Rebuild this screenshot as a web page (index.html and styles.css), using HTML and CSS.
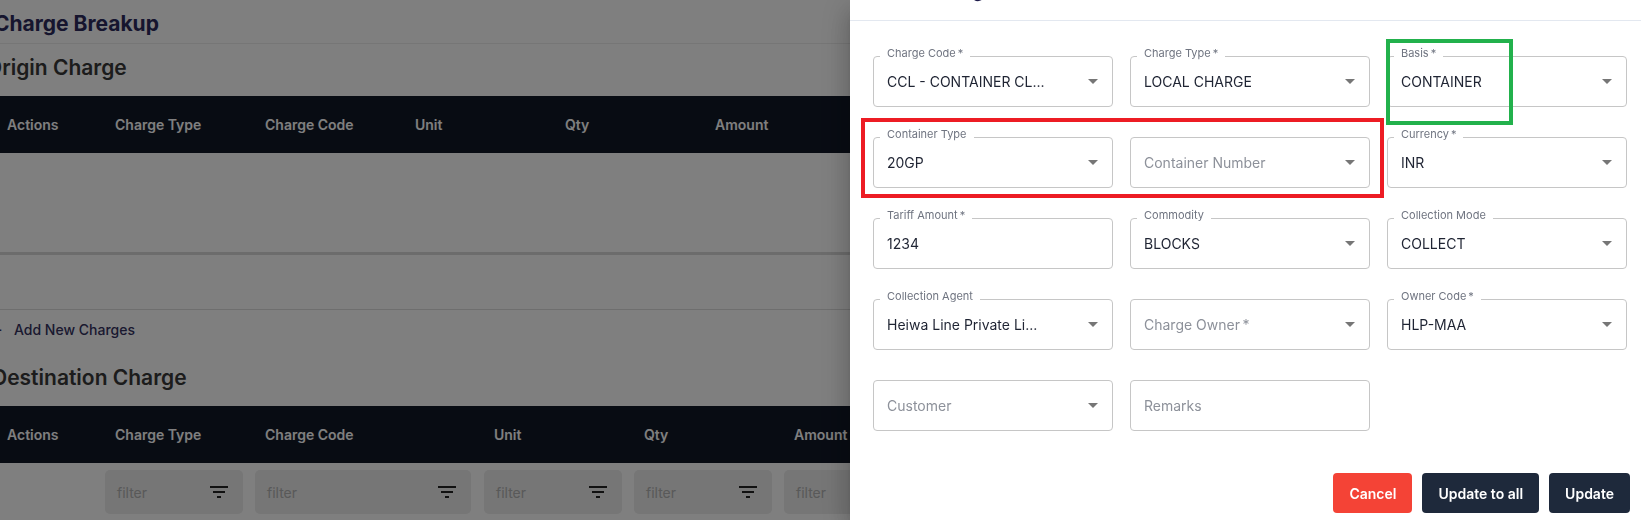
FILE: index.html
```html
<!DOCTYPE html>
<html lang="en">
<head>
<meta charset="utf-8">
<title>Charge Breakup</title>
<link rel="stylesheet" href="styles.css">
</head>
<body>
<main class="page">
  <h1 class="page-title">Charge Breakup</h1>

  <section class="block origin">
    <h2 class="section-title">Origin Charge</h2>
    <div class="grid-table">
      <div class="thead">
        <div class="th th-actions">Actions</div>
        <div class="th">Charge Type</div>
        <div class="th">Charge Code</div>
        <div class="th">Unit</div>
        <div class="th">Qty</div>
        <div class="th">Amount</div>
        <div class="th">Currency</div>
        <div class="th">Ex. Rate</div>
      </div>
      <div class="tbody"></div>
      <div class="hscroll"></div>
      <div class="tfoot"></div>
    </div>
    <div class="add-row"><span class="plus">+</span>Add New Charges</div>
  </section>

  <section class="block dest">
    <h2 class="section-title dest-title">Destination Charge</h2>
    <div class="grid-table">
      <div class="thead">
        <div class="th th-actions">Actions</div>
        <div class="th">Charge Type</div>
        <div class="th th-wide">Charge Code</div>
        <div class="th">Unit</div>
        <div class="th">Qty</div>
        <div class="th">Amount</div>
        <div class="th">Currency</div>
      </div>
      <div class="filter-row">
        <div class="fcell fcell-actions"></div>
        <div class="fcell"><div class="filter"><span>filter</span><svg viewBox="0 0 24 24"><path d="M10 18h4v-2h-4v2zM3 6v2h18V6H3zm3 7h12v-2H6v2z"/></svg></div></div>
        <div class="fcell fcell-wide"><div class="filter"><span>filter</span><svg viewBox="0 0 24 24"><path d="M10 18h4v-2h-4v2zM3 6v2h18V6H3zm3 7h12v-2H6v2z"/></svg></div></div>
        <div class="fcell"><div class="filter"><span>filter</span><svg viewBox="0 0 24 24"><path d="M10 18h4v-2h-4v2zM3 6v2h18V6H3zm3 7h12v-2H6v2z"/></svg></div></div>
        <div class="fcell"><div class="filter"><span>filter</span><svg viewBox="0 0 24 24"><path d="M10 18h4v-2h-4v2zM3 6v2h18V6H3zm3 7h12v-2H6v2z"/></svg></div></div>
        <div class="fcell"><div class="filter"><span>filter</span><svg viewBox="0 0 24 24"><path d="M10 18h4v-2h-4v2zM3 6v2h18V6H3zm3 7h12v-2H6v2z"/></svg></div></div>
      </div>
    </div>
  </section>
</main>

<div class="backdrop"></div>

<aside class="drawer">
  <div class="drawer-head"><div class="drawer-title">Edit Charge</div></div>

  <div class="form">
    <div class="field"><label class="flabel">Charge Code&thinsp;*</label><span class="value">CCL - CONTAINER CL...</span><i class="caret"></i></div>
    <div class="field"><label class="flabel">Charge Type&thinsp;*</label><span class="value">LOCAL CHARGE</span><i class="caret"></i></div>
    <div class="field"><label class="flabel">Basis&thinsp;*</label><span class="value">CONTAINER</span><i class="caret"></i></div>

    <div class="field"><label class="flabel">Container Type</label><span class="value">20GP</span><i class="caret"></i></div>
    <div class="field"><span class="value placeholder">Container Number</span><i class="caret"></i></div>
    <div class="field"><label class="flabel">Currency&thinsp;*</label><span class="value">INR</span><i class="caret"></i></div>

    <div class="field"><label class="flabel">Tariff Amount&thinsp;*</label><span class="value">1234</span></div>
    <div class="field"><label class="flabel">Commodity</label><span class="value">BLOCKS</span><i class="caret"></i></div>
    <div class="field"><label class="flabel">Collection Mode</label><span class="value">COLLECT</span><i class="caret"></i></div>

    <div class="field"><label class="flabel">Collection Agent</label><span class="value">Heiwa Line Private Li...</span><i class="caret"></i></div>
    <div class="field"><span class="value placeholder">Charge Owner&thinsp;*</span><i class="caret"></i></div>
    <div class="field"><label class="flabel">Owner Code&thinsp;*</label><span class="value">HLP-MAA</span><i class="caret"></i></div>

    <div class="field"><span class="value placeholder">Customer</span><i class="caret"></i></div>
    <div class="field"><span class="value placeholder">Remarks</span></div>
  </div>

  <div class="actions">
    <button class="btn btn-cancel">Cancel</button>
    <button class="btn btn-dark">Update to all</button>
    <button class="btn btn-dark">Update</button>
  </div>

  <div class="mark mark-red"></div>
  <div class="mark mark-green"></div>
</aside>
</body>
</html>
```

FILE: styles.css
```css
* { box-sizing: border-box; }

html, body {
  margin: 0;
  padding: 0;
  width: 100%;
  height: 100%;
  overflow: hidden;
  background: #ffffff;
  font-family: Inter, "Liberation Sans", sans-serif;
}

.page {
  margin-left: -8px;
  width: 1700px;
}

.page-title {
  margin: 0;
  padding: 10px 0 5px 2px;
  font-size: 21px;
  line-height: 28px;
  font-weight: 700;
  color: #2c2a5c;
  border-bottom: 1px solid #ededed;
}

.section-title {
  margin: 0;
  font-size: 21px;
  line-height: 28px;
  font-weight: 600;
  color: #383838;
}

.origin .section-title {
  margin: 10px 0 14px -6px;
}

.dest-title {
  margin: 25px 0 14px 0;
}

.thead {
  display: flex;
  height: 57px;
  background: #111827;
  align-items: center;
}

.th {
  flex: 0 0 150px;
  padding-left: 15px;
  font-size: 14px;
  font-weight: 600;
  color: #ffffff;
  white-space: nowrap;
}

.th-actions { flex-basis: 108px; }
.th-wide { flex-basis: 229px; }

.tbody { height: 99px; }

.hscroll {
  height: 3px;
  background: #d8d8d8;
}

.tfoot {
  height: 55px;
  border-bottom: 1px solid #dcdcdc;
}

.add-row {
  margin-top: 9px;
  display: flex;
  align-items: center;
  height: 20px;
  font-size: 14px;
  font-weight: 500;
  color: #35325f;
}

.plus {
  display: inline-block;
  width: 22px;
  font-size: 16px;
  line-height: 20px;
}

.filter-row {
  display: flex;
  padding-top: 7px;
}

.fcell {
  flex: 0 0 150px;
  padding: 0 7px 0 5px;
}

.fcell-actions { flex-basis: 108px; }
.fcell-wide { flex-basis: 229px; padding-right: 8px; }

.filter {
  height: 44px;
  border-radius: 5px;
  background: #ececec;
  display: flex;
  align-items: center;
  justify-content: space-between;
  padding: 0 12px 0 12px;
  font-size: 14px;
  color: #b2b2b2;
}

.filter svg {
  width: 24px;
  height: 24px;
  fill: #222222;
}

.backdrop {
  position: fixed;
  inset: 0;
  background: rgba(0, 0, 0, 0.5);
}

.drawer {
  position: fixed;
  top: 0;
  right: 0;
  bottom: 0;
  width: 791px;
  background: #ffffff;
  box-shadow: 0 8px 10px -5px rgba(0,0,0,0.2), 0 16px 24px 2px rgba(0,0,0,0.14), 0 6px 30px 5px rgba(0,0,0,0.12);
}

.drawer-head {
  height: 21px;
  border-bottom: 1px solid #e3e8f0;
  overflow: hidden;
  padding: 0 23px 0 33px;
}

.drawer-title {
  margin-top: -22px;
  font-size: 20px;
  line-height: 24px;
  font-weight: 700;
  color: #1e1b4b;
}

.form {
  display: grid;
  grid-template-columns: repeat(3, 1fr);
  column-gap: 17px;
  row-gap: 30px;
  padding: 35px 14px 0 23px;
}

.field {
  position: relative;
  height: 51px;
  border: 1px solid #c6c6c6;
  border-radius: 4px;
  display: flex;
  align-items: center;
  padding: 0 14px 0 13px;
}

.flabel {
  position: absolute;
  top: -10px;
  left: 6px;
  padding: 0 7px;
  background: #ffffff;
  font-size: 11px;
  line-height: 13px;
  color: #6f7480;
  white-space: nowrap;
}

.value {
  flex: 1;
  font-size: 14px;
  color: #1f2433;
  white-space: nowrap;
  overflow: hidden;
}

.placeholder {
  color: #8d919a;
}

.caret {
  width: 0;
  height: 0;
  border-left: 5px solid transparent;
  border-right: 5px solid transparent;
  border-top: 5px solid #767676;
}

.actions {
  display: flex;
  justify-content: flex-end;
  gap: 10px;
  margin-top: 42px;
  padding-right: 11px;
}

.btn {
  height: 40px;
  padding: 0 16px;
  border: 0;
  border-radius: 4px;
  font-family: Inter, "Liberation Sans", sans-serif;
  font-size: 14px;
  font-weight: 600;
  color: #ffffff;
}

.btn-cancel { background: #f44336; }
.btn-dark { background: #1e293b; }

.mark {
  position: absolute;
  border-style: solid;
  border-width: 4px;
}

.mark-red {
  left: 11px;
  top: 118px;
  width: 523px;
  height: 80px;
  border-color: #ed1c24;
}

.mark-green {
  left: 536px;
  top: 39px;
  width: 127px;
  height: 86px;
  border-color: #22b14c;
}
```
